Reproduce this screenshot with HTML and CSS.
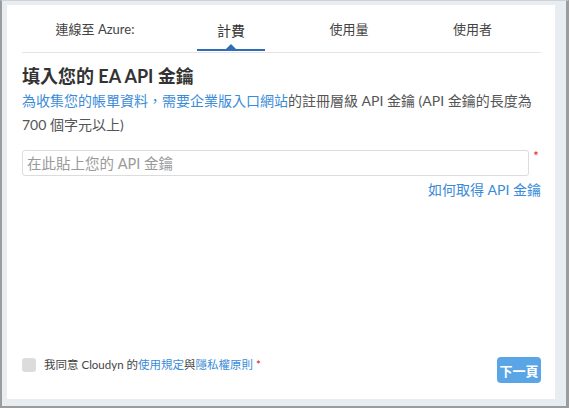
FILE: index.html
```html
<!DOCTYPE html>
<html lang="zh-Hant">
<head>
<meta charset="utf-8">
<title>填入您的 EA API 金鑰</title>
<link rel="stylesheet" href="styles.css">
</head>
<body>
<div class="window">
  <div class="panel">
    <nav class="tabs">
      <div class="tab">連線至 Azure:</div>
      <div class="tab active"><span>計費</span><i class="indicator"></i></div>
      <div class="tab">使用量</div>
      <div class="tab">使用者</div>
    </nav>
    <h1 class="title">填入您的 EA API 金鑰</h1>
    <p class="desc"><a class="link">為收集您的帳單資料，需要企業版入口網站</a><span>的註冊層級 API 金鑰 (API 金鑰的長度為</span> <span>700 個字元以上)</span></p>
    <div class="input-row">
      <input class="key-input" type="text" placeholder="在此貼上您的 API 金鑰">
      <span class="req">*</span>
    </div>
    <div class="help"><a class="link">如何取得 API 金鑰</a></div>
    <div class="footer">
      <label class="agree">
        <span class="box"></span>
        <span class="agree-text">我同意 Cloudyn 的<a class="link">使用規定</a>與<a class="link">隱私權原則</a> <span class="req-inline">*</span></span>
      </label>
      <button class="next">下一頁</button>
    </div>
  </div>
</div>
</body>
</html>
```

FILE: styles.css
```css
* { box-sizing: border-box; }
html, body { margin: 0; padding: 0; }
body {
  font-family: Lato, "Noto Sans CJK TC", sans-serif;
  color: #444;
}
.window {
  height: 408px;
  width: 569px;
  background: #e8edf2;
  border-top: 1px solid #cfd2d6;
  border-left: 2px solid #9c9c9c;
  border-right: 3px solid #9c9c9c;
  border-bottom: 2px solid #9c9c9c;
  padding: 4px 11px 7px 5px;
  display: flex;
}
.panel {
  flex: 1;
  background: #fff;
  padding: 0 14px 16px 15px;
  display: flex;
  flex-direction: column;
}
.tabs {
  display: grid;
  grid-template-columns: 146px 126px 110px 1fr;
  height: 48px;
  border-bottom: 1px solid #e4e4e4;
}
.tab {
  text-align: center;
  font-size: 13px;
  line-height: 16px;
  padding-top: 16px;
  color: #444;
}
.tab.active {
  font-size: 14px;
  color: #333;
  padding-top: 18px;
  display: flex;
  flex-direction: column;
  align-items: center;
}
.tab.active span { flex: 1; }
.indicator {
  position: relative;
  display: block;
  width: 68px;
  height: 2px;
  background: #2f6db5;
  margin-bottom: 1px;
}
.indicator::before {
  content: "";
  position: absolute;
  left: 29px;
  top: -5px;
  border-left: 5.5px solid transparent;
  border-right: 5.5px solid transparent;
  border-bottom: 5px solid #2f6db5;
}
.title {
  margin: 13px 0 2px;
  font-size: 18px;
  line-height: 21px;
  font-weight: 700;
  color: #333;
}
.desc {
  margin: 0;
  font-size: 14px;
  line-height: 24px;
  color: #555;
}
.link { color: #3a8bd8; text-decoration: none; }
.input-row {
  display: flex;
  margin-top: 13px;
}
.key-input {
  flex: 1;
  height: 26px;
  border: 1px solid #dcdcdc;
  border-radius: 3px;
  padding: 0 4px;
  font-family: Lato, "Noto Sans CJK TC", sans-serif;
  font-size: 14.5px;
  color: #333;
  outline: none;
}
.key-input::placeholder { color: #9a9a9a; }
.req {
  width: 12px;
  text-align: center;
  color: #e01010;
  font-size: 13px;
  line-height: 12px;
  padding-left: 2px;
}
.help {
  margin-top: 4px;
  text-align: right;
  font-size: 14px;
  line-height: 19px;
}
.footer {
  margin-top: auto;
  display: flex;
  justify-content: space-between;
  align-items: flex-start;
}
.agree {
  display: flex;
  align-items: center;
  margin-top: 1px;
  gap: 8px;
}
.box {
  width: 14px;
  height: 14px;
  background: #dcdcdc;
  border-radius: 3px;
}
.agree-text {
  font-size: 11.5px;
  line-height: 14px;
  color: #444;
}
.req-inline { color: #e01010; }
.next {
  width: 44px;
  height: 26px;
  border: none;
  border-radius: 4px;
  background: #5aa5e6;
  color: #fff;
  font-family: Lato, "Noto Sans CJK TC", sans-serif;
  font-size: 13px;
  font-weight: 700;
  padding: 0;
}
```
